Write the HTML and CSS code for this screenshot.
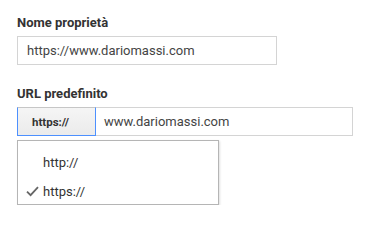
FILE: index.html
```html
<!DOCTYPE html>
<html>

<head>
    <title>Proprietà</title>
    <meta charset="utf-8">
    <meta name="viewport" content="width=device-width, initial-scale=1.0">
    <link rel="stylesheet" href="styles.css">
</head>

<body>

    <section class="campo">
        <h2 class="etichetta">Nome proprietà</h2>
        <div class="input nome">https://www.dariomassi.com</div>
    </section>

    <section class="campo secondo">
        <h2 class="etichetta">URL predefinito</h2>
        <div class="riga">
            <button class="protocollo">https://</button>
            <div class="input url">www.dariomassi.com</div>
        </div>
        <ul class="menu">
            <li>http://</li>
            <li class="valgt">
                <svg class="spunta" width="13" height="11" viewBox="0 0 13 11">
                    <path d="M1 5.6 L4.6 9.2 L12 1.2" fill="none" stroke="#666" stroke-width="1.8" />
                </svg>
                https://
            </li>
        </ul>
    </section>

</body>

</html>
```

FILE: styles.css
```css
body {
    margin: 0;
    padding: 15px 17px 0 17px;
    background-color: #fff;
    font-family: Roboto, "Liberation Sans", Arial, sans-serif;
    color: #333;
}

.campo {
    position: relative;
}

.secondo {
    margin-top: 21px;
}

.etichetta {
    margin: 0 0 5px 0;
    font-size: 13px;
    line-height: 16px;
    font-weight: 700;
    color: #333;
}

.input {
    box-sizing: border-box;
    height: 29px;
    border: 1px solid #d4d4d4;
    font-size: 13px;
    line-height: 27px;
    color: #444;
}

.nome {
    width: 260px;
    padding-left: 9px;
}

.riga {
    display: flex;
    width: 336px;
}

.protocollo {
    box-sizing: border-box;
    width: 79px;
    height: 29px;
    margin: 0;
    padding: 0 0 0 2px;
    border: 1px solid #4d90fe;
    border-top-color: #c6c6c6;
    background: linear-gradient(#f5f5f5, #ebebeb);
    font-family: inherit;
    font-size: 11.5px;
    font-weight: 700;
    color: #333;
    text-align: left;
    text-indent: 12px;
}

.url {
    flex: 1;
    border-left: none;
    padding-left: 8px;
}

.menu {
    position: relative;
    box-sizing: border-box;
    width: 202px;
    margin: 4px 0 0 0;
    padding: 7px 0 0 0;
    list-style: none;
    border: 1px solid #b5b5b5;
    height: 65px;
    box-shadow: 1px 1px 2px rgba(0, 0, 0, 0.12);
}

.menu::after {
    content: "";
    position: absolute;
    left: -1px;
    top: 64px;
    width: 139px;
    height: 3px;
    background: #d6d6d6;
}

.menu li {
    position: relative;
    height: 29px;
    padding-left: 25px;
    font-size: 13px;
    line-height: 29px;
    color: #333;
}

.spunta {
    position: absolute;
    left: 8px;
    top: 9px;
}
```
